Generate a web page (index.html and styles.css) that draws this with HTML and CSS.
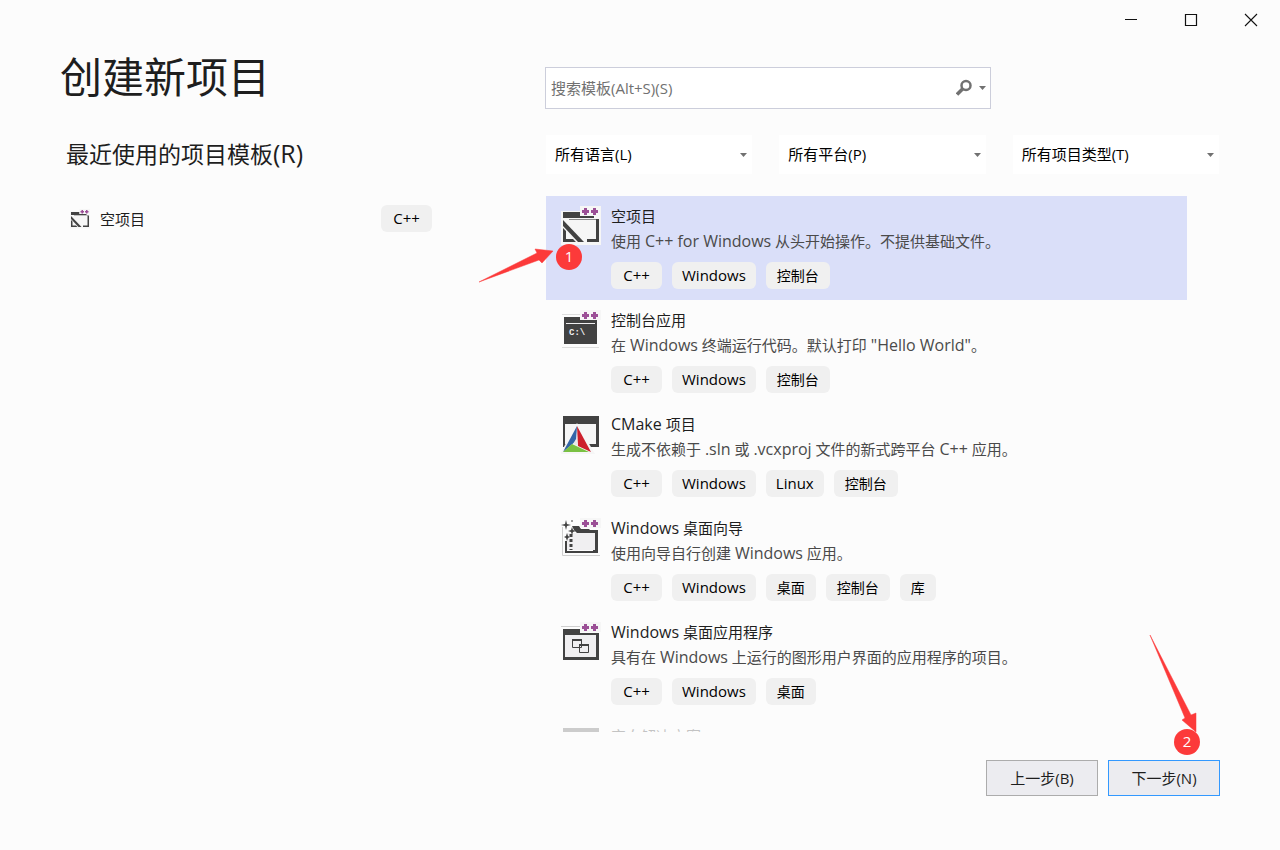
FILE: index.html
```
<!DOCTYPE html>
<html lang="zh-CN">
<head>
<meta charset="utf-8">
<title>创建新项目</title>
<link rel="stylesheet" href="styles.css">
</head>
<body>
<svg class="defs" aria-hidden="true">
  <defs>
    <g id="plusplus">
      <path d="M19 0h21v10H19z" fill="#f6f6f6"/>
      <path d="M23 2h3v2h2v3h-2v2h-3v-2h-2V4h2zM32 2h3v2h2v3h-2v2h-3v-2h-2V4h2z" fill="#9b4f96"/>
    </g>
    <g id="empty-project">
      <path d="M0 5h40v34H0z" fill="#f6f6f6"/>
      <path d="M2 6h17v4h14v2H2z" fill="#424242"/>
      <path d="M8 13h28v1H8z" fill="#8a8a8a"/>
      <path d="M35 13h3v23H26v-3h9z" fill="#424242"/>
      <path d="M2 22l3 3v8h7l3 3H2z" fill="#424242"/>
      <path d="M2 14l21 22h-6L2 20z" fill="#424242"/>
      <use href="#plusplus"/>
    </g>
  </defs>
</svg>
<div class="window">
  <header class="titlebar">
    <button class="caption" type="button" aria-label="最小化"><svg width="14" height="14"><path d="M1 6.500h12" stroke="#111" fill="none"/></svg></button>
    <button class="caption" type="button" aria-label="最大化"><svg width="14" height="14"><path d="M1.500 1.500h11v11h-11z" stroke="#111" stroke-width="1.200" fill="none"/></svg></button>
    <button class="caption" type="button" aria-label="关闭"><svg width="14" height="14"><path d="M1 1l12 12M13 1L1 13" stroke="#111" stroke-width="1.100" fill="none"/></svg></button>
  </header>
  <main class="content">
    <section class="recent">
      <h1 class="page-title">创建新项目</h1>
      <h2 class="recent-title">最近使用的项目模板<span class="hotkey">(R)</span></h2>
      <div class="recent-item">
        <svg width="20" height="20" viewBox="0 0 40 40"><use href="#empty-project"/></svg>
        <span class="recent-name">空项目</span>
        <span class="tag latin-tag">C++</span>
      </div>
    </section>
    <section class="templates">
      <div class="search">
        <input class="search-input" type="text" aria-label="搜索模板" placeholder="搜索模板(Alt+S)(S)">
        <button class="search-button" type="button" aria-label="搜索">
          <svg width="30" height="18"><circle cx="10" cy="6.500" r="4.500" fill="none" stroke="#717171" stroke-width="2.500"/><path d="M7 9.500L1 15.500" stroke="#717171" stroke-width="3.500"/><path d="M23 7h7l-3.500 4z" fill="#717171"/></svg>
        </button>
      </div>
      <div class="filters">
        <select class="filter" aria-label="语言"><option>所有语言(L)</option></select>
        <select class="filter" aria-label="平台"><option>所有平台(P)</option></select>
        <select class="filter" aria-label="项目类型"><option>所有项目类型(T)</option></select>
      </div>
      <div class="list-area">
        <ul class="list">
          <li class="item selected">
            <svg class="icon" width="40" height="40"><use href="#empty-project"/></svg>
            <div class="info">
              <h3 class="name">空项目</h3>
              <p class="desc">使用 <span class="latin">C++ for Windows</span> 从头开始操作。不提供基础文件。</p>
              <div class="tags"><span class="tag latin-tag">C++</span><span class="tag latin-tag">Windows</span><span class="tag">控制台</span></div>
            </div>
          </li>
          <li class="item">
            <svg class="icon" width="40" height="40">
              <path d="M1 4.500h20M1 37.500h37" stroke="#dedede" fill="none"/>
              <path d="M3 7h33v27H3z" fill="#424242"/>
              <path d="M5 13h29v1H5z" fill="#f0eff1"/>
              <text class="prompt" x="8" y="25">C:\</text>
              <use href="#plusplus"/>
            </svg>
            <div class="info">
              <h3 class="name">控制台应用</h3>
              <p class="desc">在 <span class="latin">Windows</span> 终端运行代码。默认打印 <span class="latin">"Hello World"</span>。</p>
              <div class="tags"><span class="tag latin-tag">C++</span><span class="tag latin-tag">Windows</span><span class="tag">控制台</span></div>
            </div>
          </li>
          <li class="item">
            <svg class="icon" width="40" height="40">
              <path d="M2 2h36v31H2z" fill="#424242"/>
              <path d="M4 10h31v20H4z" fill="#f6f6f6"/>
              <path d="M16 9L-1 40h35z" fill="#f6f6f6"/>
              <path d="M16 12L2 38l13-11z" fill="#3465a8"/>
              <path d="M16 12l14 26-13-6z" fill="#cd202c"/>
              <path d="M2 38l9-8 17 8z" fill="#7ac143"/>
              <path d="M15 25l2 7-5-2z" fill="#e8e8e8"/>
            </svg>
            <div class="info">
              <h3 class="name"><span class="latin">CMake</span> 项目</h3>
              <p class="desc">生成不依赖于 <span class="latin">.sln</span> 或 <span class="latin">.vcxproj</span> 文件的新式跨平台 <span class="latin">C++</span> 应用。</p>
              <div class="tags"><span class="tag latin-tag">C++</span><span class="tag latin-tag">Windows</span><span class="tag latin-tag">Linux</span><span class="tag">控制台</span></div>
            </div>
          </li>
          <li class="item">
            <svg class="icon" width="40" height="40">
              <path d="M1.500 9v28.500H39" stroke="#cfcfcf" fill="none"/>
              <path d="M4 23h2v10h26V15H16l-3-3-2-4h7l2 3h8l1 1h8v23H4z" fill="#424242"/>
              <path d="M6 15h28v17H6z" fill="#f0eff1"/>
              <path d="M10 16v16" stroke="#424242" stroke-width="3" stroke-dasharray="3 2" fill="none"/>
              <path d="M5 2l1 4 4 1-4 1-1 4-1-4-4-1 4-1zM11 9l1 3 3 1-3 1-1 3-1-3-3-1 3-1zM6 15l1 3 2 1-2 1-1 3-1-3-2-1 2-1zM11 2l1 1-1 1-1-1z" fill="#424242"/>
              <use href="#plusplus"/>
            </svg>
            <div class="info">
              <h3 class="name"><span class="latin">Windows</span> 桌面向导</h3>
              <p class="desc">使用向导自行创建 <span class="latin">Windows</span> 应用。</p>
              <div class="tags"><span class="tag latin-tag">C++</span><span class="tag latin-tag">Windows</span><span class="tag">桌面</span><span class="tag">控制台</span><span class="tag">库</span></div>
            </div>
          </li>
          <li class="item">
            <svg class="icon" width="40" height="40">
              <path d="M0 4.500h19" stroke="#cfcfcf" fill="none"/>
              <path d="M2 7h17v4h19v27H2z" fill="#424242"/>
              <path d="M4 13h31v22H4z" fill="#f0eff1"/>
              <path d="M11.500 17.500h9v8h-9zM18.500 23.500h9v7h-9z" fill="#f0eff1" stroke="#424242"/>
              <path d="M11 17h10v2H11zM18 22h10v2H18z" fill="#424242"/>
              <use href="#plusplus"/>
            </svg>
            <div class="info">
              <h3 class="name"><span class="latin">Windows</span> 桌面应用程序</h3>
              <p class="desc">具有在 <span class="latin">Windows</span> 上运行的图形用户界面的应用程序的项目。</p>
              <div class="tags"><span class="tag latin-tag">C++</span><span class="tag latin-tag">Windows</span><span class="tag">桌面</span></div>
            </div>
          </li>
          <li class="item fading">
            <svg class="icon" width="40" height="40"><path d="M2 2h36v31H2z" fill="#424242"/></svg>
            <div class="info"><h3 class="name">空白解决方案</h3></div>
          </li>
        </ul>
        <svg class="arrow arrow-one" width="76" height="36" aria-hidden="true"><path d="M0 34L58 5 56 1 74 3 63 15 60 12z" fill="#fc3a3a" stroke="#fc3a3a" stroke-width="0.500"/></svg>
        <span class="badge badge-one">1</span>
      </div>
    </section>
  </main>
  <footer class="actions">
    <button class="action" type="button">上一步(B)</button>
    <button class="action primary" type="button">下一步(N)</button>
    <svg class="arrow arrow-two" width="48" height="98" aria-hidden="true"><path d="M1 1L42 81 47 79V98L33 86 36 84z" fill="#fc3a3a" stroke="#fc3a3a" stroke-width="0.500"/></svg>
    <span class="badge badge-two">2</span>
  </footer>
</div>
</body>
</html>
```
FILE: styles.css
```
* { box-sizing: border-box; }

body {
  margin: 0;
  background: #fcfcfc;
  color: #1e1e1e;
  font-family: "Open Sans", "Noto Sans CJK SC", sans-serif;
  font-size: 15px;
}

h1, h2, h3, p, ul { margin: 0; padding: 0; font-weight: 400; }
button, input, select { font: inherit; color: inherit; }

.defs { position: absolute; width: 0; height: 0; }

.window {
  display: flex;
  flex-direction: column;
  height: 100vh;
  padding-bottom: 54px;
}

.titlebar { display: flex; justify-content: flex-end; }

.caption {
  display: flex;
  align-items: center;
  justify-content: center;
  width: 60px;
  height: 40px;
  padding: 0 0 0 2px;
  border: 0;
  background: none;
}

.content {
  display: grid;
  grid-template-columns: 372px 1fr;
  column-gap: 113px;
  flex: 1;
  min-height: 0;
  padding: 0 60px;
}

.page-title { padding-top: 7px; font-size: 42px; line-height: 60px; }
.recent-title { padding: 32px 0 0 6px; font-size: 23px; line-height: 30px; }
.hotkey { font-size: 25px; line-height: 1; }

.recent-item {
  display: flex;
  align-items: center;
  gap: 10px;
  margin-top: 36px;
  padding-left: 10px;
}

.recent-name { flex: 1; font-size: 15px; }

.tag {
  padding: 0 11px;
  border-radius: 6px;
  background: #f0f0f0;
  color: #000;
  font-size: 14px;
  line-height: 27px;
}

.latin-tag {
  min-width: 51px;
  padding: 0 10px;
  font-size: 15px;
  text-align: center;
}

.templates {
  display: flex;
  flex-direction: column;
  min-width: 0;
  min-height: 0;
}

.search {
  display: flex;
  width: 66%;
  height: 42px;
  margin-top: 27px;
  border: 1px solid #cccedb;
  background: #fff;
}

.search-input {
  flex: 1;
  min-width: 0;
  padding: 0 5px;
  border: 0;
  outline: 0;
  background: none;
}

.search-input::placeholder { color: #717171; opacity: 1; }

.search-button {
  display: flex;
  align-items: center;
  padding: 0 4px;
  border: 0;
  background: none;
}

.filters {
  display: grid;
  grid-template-columns: repeat(3, 1fr);
  gap: 27px;
  margin: 26px 1px 0;
}

.filter {
  height: 39px;
  padding: 0 24px 2px 9px;
  border: 0;
  border-radius: 0;
  appearance: none;
  color: #000;
  background: #fff url("data:image/svg+xml,%3Csvg xmlns='http://www.w3.org/2000/svg' width='7' height='4'%3E%3Cpath d='M0 0h7L3.500 4z' fill='%23717171'/%3E%3C/svg%3E") no-repeat right 5px center;
}

.list-area {
  position: relative;
  flex: 1;
  min-height: 0;
  margin: 22px 33px 0 1px;
}

.list { height: 100%; overflow: hidden; list-style: none; }

.item {
  display: flex;
  gap: 10px;
  height: 104px;
  padding: 8px 15px;
}

.selected { background: #dadff9; }
.fading { opacity: 0.25; }
.icon { flex: none; margin-top: 2px; }
.info { min-width: 0; }
.name, .desc { font-size: 15px; line-height: 25px; white-space: nowrap; }
.desc { color: #4a4a4a; }
.latin { font-size: 16px; line-height: 1; }
.tags { display: flex; gap: 10px; margin-top: 8px; }
.prompt { fill: #f0eff1; font: bold 9px "Liberation Mono", monospace; }

.actions {
  position: relative;
  display: flex;
  justify-content: flex-end;
  gap: 10px;
  margin-top: 28px;
  padding: 0 60px;
}

.action {
  width: 112px;
  height: 36px;
  padding: 0 0 2px;
  border: 1px solid #acacac;
  background: #ececf0;
}

.primary { border-color: #3399ff; }

.badge {
  position: absolute;
  width: 26px;
  height: 26px;
  border-radius: 50%;
  background: #fc3a3a;
  color: #fff;
  line-height: 24px;
  text-align: center;
}

.badge-one { left: 10px; top: 48px; }
.badge-two { right: 80px; top: -31px; }
.arrow { position: absolute; }
.arrow-one { left: -67px; top: 52px; }
.arrow-two { right: 83px; top: -126px; }
```
